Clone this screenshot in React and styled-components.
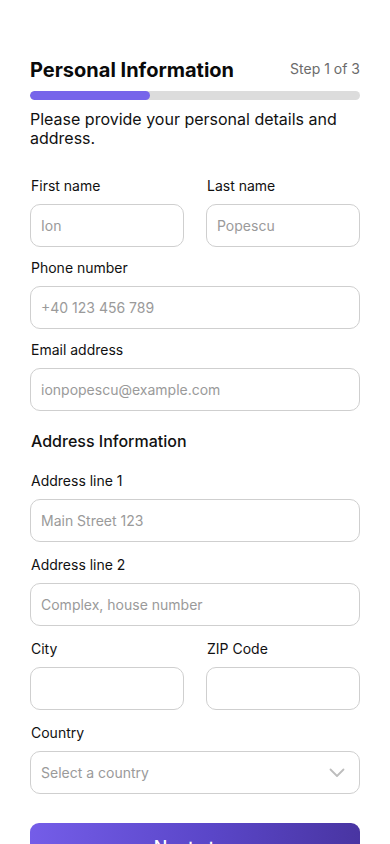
import React from "react";
import styled, { createGlobalStyle } from "styled-components";

const GlobalStyle = createGlobalStyle`
  body {
    margin: 0;
    background: #fff;
    font-family: Inter, "Noto Sans", sans-serif;
    color: #111;
  }
`;

const App = () => {
  return (
    <>
      <GlobalStyle />
      <Page>
        <Header>
          <Title>Personal Information</Title>
          <StepText>Step 1 of 3</StepText>
        </Header>
        <Track>
          <Fill style={{ width: "36.4%" }} />
        </Track>
        <Intro>Please provide your personal details and address.</Intro>

        <Form>
          <Group $gap={12}>
            <Row>
              <Field label="First name" placeholder="Ion" />
              <Field label="Last name" placeholder="Popescu" />
            </Row>
            <Field label="Phone number" placeholder="+40 123 456 789" />
            <Field label="Email address" placeholder="ionpopescu@example.com" />
          </Group>

          <Section>Address Information</Section>

          <Group $gap={14}>
            <Field label="Address line 1" placeholder="Main Street 123" />
            <Field label="Address line 2" placeholder="Complex, house number" />
            <Row>
              <Field label="City" />
              <Field label="ZIP Code" />
            </Row>
            <FieldWrap>
              <Label>Country</Label>
              <SelectBox>
                <Placeholder>Select a country</Placeholder>
                <svg width="16" height="10" viewBox="0 0 16 10" fill="none">
                  <path d="M1.5 1.5L8 8L14.5 1.5" stroke="#bdbdbd" strokeWidth="1.8" strokeLinecap="round" strokeLinejoin="round" />
                </svg>
              </SelectBox>
            </FieldWrap>
          </Group>
        </Form>

        <NextButton>Next step</NextButton>
      </Page>
    </>
  );
};

const Field = ({ label, placeholder }) => (
  <FieldWrap>
    <Label>{label}</Label>
    <Input placeholder={placeholder || ""} />
  </FieldWrap>
);

const Page = styled.div`
  box-sizing: border-box;
  width: 390px;
  padding: 58px 30px 40px;
`;

const Header = styled.div`
  display: flex;
  justify-content: space-between;
  align-items: center;
  height: 24px;
`;

const Title = styled.h1`
  margin: 0;
  font-size: 20px;
  font-weight: 700;
  color: #0a0a0a;
`;

const StepText = styled.span`
  font-size: 14px;
  color: #6b6b6b;
  margin-top: -3px;
`;

const Track = styled.div`
  margin-top: 9px;
  height: 9px;
  border-radius: 5px;
  background: #dcdcdc;
  overflow: hidden;
`;

const Fill = styled.div`
  height: 100%;
  border-radius: 5px;
  background: #7765ea;
`;

const Intro = styled.p`
  margin: 10px 0 0;
  font-size: 16px;
  line-height: 19px;
  color: #111;
`;

const Form = styled.div`
  display: flex;
  flex-direction: column;
  margin-top: 29px;
`;

const Group = styled.div`
  display: flex;
  flex-direction: column;
  gap: ${(p) => p.$gap}px;
`;

const Row = styled.div`
  display: grid;
  grid-template-columns: 1fr 1fr;
  gap: 22px;
`;

const FieldWrap = styled.div`
  display: flex;
  flex-direction: column;
`;

const Label = styled.label`
  font-size: 14px;
  line-height: 18px;
  margin: 0 0 9px 1px;
  color: #111;
`;

const Input = styled.input`
  box-sizing: border-box;
  width: 100%;
  height: 43px;
  border: 1px solid #cfcfcf;
  border-radius: 10px;
  padding: 0 10px;
  font-family: Inter, "Noto Sans", sans-serif;
  font-size: 14px;
  color: #111;
  background: #fff;
  outline: none;
  &::placeholder {
    color: #9a9a9a;
  }
`;

const Section = styled.h2`
  margin: 20px 0 21px 1px;
  font-size: 16px;
  font-weight: 500;
  line-height: 20px;
  color: #111;
`;

const SelectBox = styled.div`
  box-sizing: border-box;
  height: 43px;
  border: 1px solid #cfcfcf;
  border-radius: 10px;
  padding: 0 14px 0 10px;
  display: flex;
  align-items: center;
  justify-content: space-between;
`;

const Placeholder = styled.span`
  font-size: 14px;
  color: #9a9a9a;
`;

const NextButton = styled.button`
  display: block;
  width: 100%;
  height: 48px;
  margin-top: 29px;
  border: none;
  border-radius: 9px;
  background: linear-gradient(90deg, #745de8 0%, #5a46c8 55%, #4935a2 100%);
  color: #fff;
  font-family: Inter, "Noto Sans", sans-serif;
  font-size: 18px;
  font-weight: 500;
`;

export default App;
